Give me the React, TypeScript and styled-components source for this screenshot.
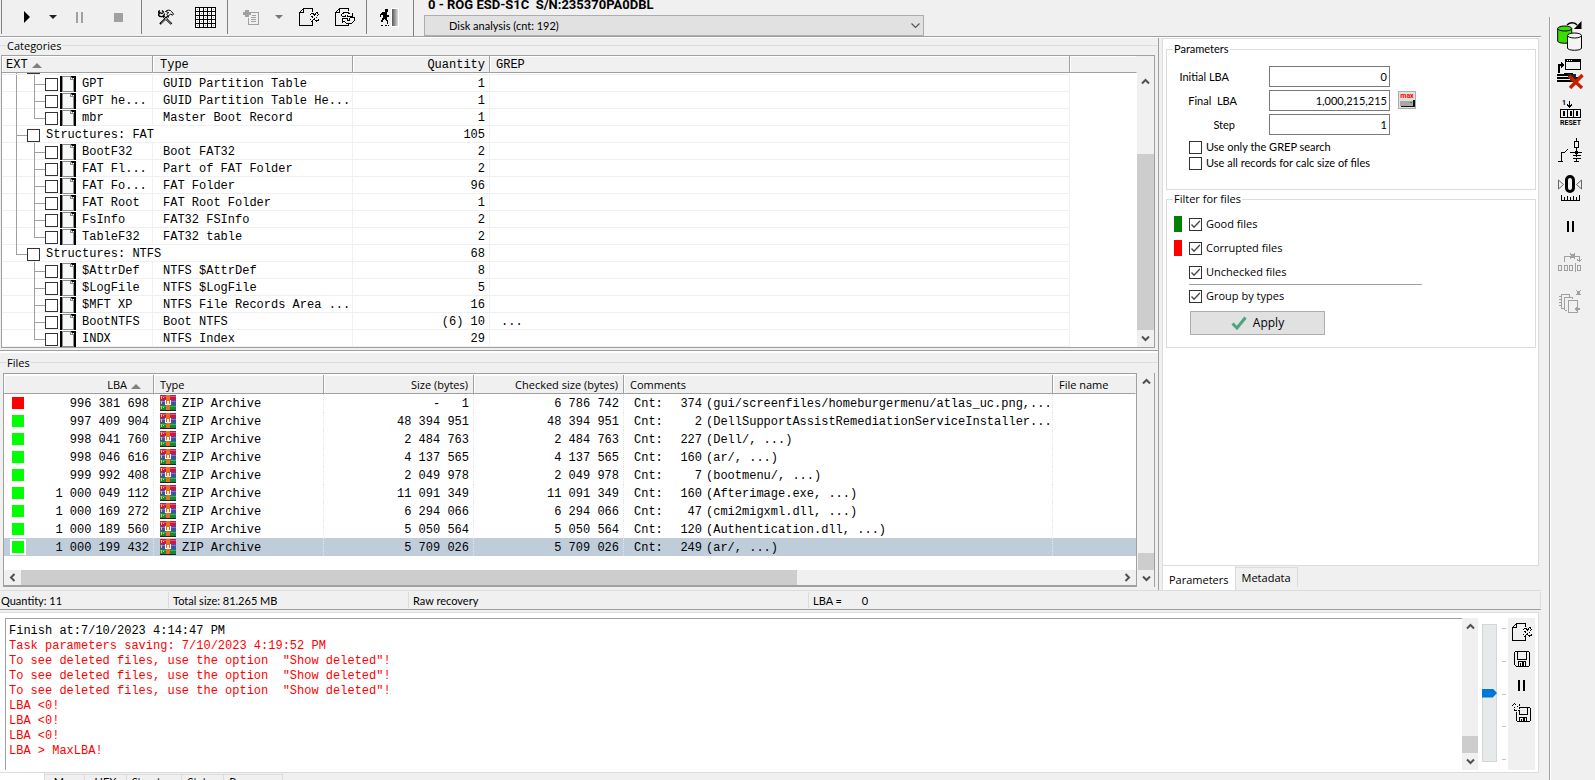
import React from "react";
import styled, { createGlobalStyle, css } from "styled-components";

const UI = '"Open Sans", "Noto Sans", sans-serif';
const NARROW = 'Lato, "Open Sans", sans-serif';
const MONO = '"Liberation Mono", "Courier New", monospace';

const C = {
  face: "#f0f0f0",
  shadow: "#a0a0a0",
  edge: "#dcdcdc",
  grid: "#f0f0f0",
  thumb: "#cdcdcd",
  select: "#bfccda",
};

const GlobalStyle = createGlobalStyle`
  *, *::before, *::after { box-sizing: border-box; }
  body { margin: 0; background: ${C.face}; color: #000; font: 11px/16px ${UI}; }
  button, input, select { font: inherit; color: inherit; margin: 0; }
`;

/* ---------- shell ---------- */

const Window = styled.div`
  display: flex;
  height: 100vh;
  overflow: hidden;
  background: ${C.face};
`;

const Main = styled.div`
  flex: 1;
  min-width: 0;
  display: flex;
  flex-direction: column;
`;

const Workspace = styled.div`
  flex: 1;
  min-height: 0;
  display: flex;
`;

const LeftPane = styled.div`
  flex: 1;
  min-width: 0;
  display: flex;
  flex-direction: column;
  border-right: 1px solid ${C.shadow};
`;

const RightPane = styled.aside`
  flex: none;
  width: 382px;
  padding: 0 2px 0 3px;
  display: flex;
  flex-direction: column;
`;

/* ---------- toolbar ---------- */

const ToolbarRow = styled.header`
  flex: none;
  display: flex;
  height: 38px;
  padding-left: 1px;
  border-bottom: 1px solid #fff;
  box-shadow: inset 0 -1px 0 ${C.shadow};
`;

const ToolGroup = styled.div<{ $l: number; $r: number; $gap: number }>`
  display: flex;
  align-items: center;
  gap: ${(p) => p.$gap}px;
  height: 34px;
  padding: 0 ${(p) => p.$r}px 0 ${(p) => p.$l}px;
  border-left: 1px solid #808080;
`;

const IconButton = styled.button`
  display: grid;
  place-items: center;
  padding: 0;
  border: 0;
  background: none;
`;

const StopButton = styled(IconButton)`
  margin-left: 12px;
`;

const TaskBox = styled.div`
  flex: 1;
  height: 36px;
  padding-left: 10px;
  border-left: 1px solid #808080;
  display: flex;
  flex-direction: column;
  justify-content: space-between;
`;

const TaskTitle = styled.h1`
  margin: 0 0 0 4px;
  height: 14px;
  display: flex;
  align-items: flex-end;
  overflow: hidden;
  font: 700 13px/18px Roboto, sans-serif;
  white-space: pre;
`;

const SelectWrap = styled.div`
  display: grid;
  width: 500px;
  height: 21px;
  align-items: center;
  > * { grid-area: 1 / 1; }
  > svg { justify-self: end; margin-right: 4px; pointer-events: none; }
`;

const TaskSelect = styled.select`
  width: 100%;
  height: 21px;
  padding: 0 20px 0 24px;
  border: 1px solid #adadad;
  border-radius: 0;
  background: #e1e1e1;
  appearance: none;
  font-family: ${NARROW};
`;

/* ---------- group frames ---------- */

const GroupTitle = styled.h2`
  flex: none;
  display: flex;
  align-items: center;
  gap: 1px;
  height: 15px;
  font: 11px/15px ${UI};
  &::before, &::after { content: ""; height: 1px; background: ${C.edge}; }
  &::before { width: 6px; }
  &::after { flex: 1; }
`;

const CategoriesGroup = styled.section`
  flex: none;
  padding: 0 3px 2px 1px;
  border-bottom: 1px solid ${C.shadow};
  > h2 { margin: 0 -3px 2px -1px; }
`;

const FilesGroup = styled.section`
  flex: 1;
  min-height: 0;
  display: flex;
  flex-direction: column;
  padding: 2px 3px 3px 3px;
  border-top: 2px solid #fff;
  > h2 { margin: 0 -3px 3px -3px; }
`;

const ListFrame = styled.div`
  display: flex;
  flex: 1;
  min-height: 0;
  border: 1px solid ${C.shadow};
  background: #fff;
`;

/* ---------- scroll bars ---------- */

const VBar = styled.div<{ $w: number; $lead?: number }>`
  flex: none;
  display: flex;
  flex-direction: column;
  align-items: center;
  width: ${(p) => p.$w}px;
  padding-top: ${(p) => p.$lead ?? 0}px;
  background: ${C.face};
`;

const HBar = styled.div`
  flex: none;
  display: flex;
  height: 15px;
  background: ${C.face};
`;

const BarButton = styled.button`
  flex: none;
  display: grid;
  place-items: center;
  width: 17px;
  height: 17px;
  padding: 0;
  border: 0;
  background: none;
`;

const HBarButton = styled(BarButton)`
  height: 15px;
`;

const Spring = styled.div<{ $grow: number }>`
  flex: ${(p) => p.$grow} 1 0;
`;

const Thumb = styled.div<{ $grow: number }>`
  flex: ${(p) => p.$grow} 1 0;
  align-self: stretch;
  background: ${C.thumb};
`;

/* ---------- tables ---------- */

const DataTable = styled.table`
  width: 100%;
  table-layout: fixed;
  border-collapse: separate;
  border-spacing: 0;
  font: 12px/16px ${MONO};
  white-space: pre;
  td, th { padding: 0; font-weight: 400; text-align: left; }
`;

const Col = styled.col<{ $w?: number }>`
  width: ${(p) => (p.$w ? p.$w + "px" : "auto")};
`;

const Head = styled.th<{ $ui?: boolean; $right?: boolean; $last?: boolean; $x?: number }>`
  height: ${(p) => (p.$ui ? 19 : 17)}px;
  background: ${C.face};
  border-bottom: 1px solid ${C.shadow};
  border-right: 1px solid ${(p) => (p.$last ? "transparent" : C.shadow)};
  box-shadow: inset 1px 1px 0 #fff;
  line-height: 13px;
  ${(p) => p.$ui && css`font: 11px/16px ${UI};`}
  && {
    text-align: ${(p) => (p.$right ? "right" : "left")};
    padding-top: ${(p) => (p.$ui ? 2 : 3)}px;
    padding-${(p) => (p.$right ? "right" : "left")}: ${(p) => p.$x ?? 0}px;
  }
  svg { margin-left: 4px; }
`;

const TreeTd = styled.td<{ $bare?: boolean; $right?: boolean; $x?: number }>`
  height: 17px;
  border-bottom: 1px solid ${C.grid};
  border-right: 1px solid ${C.grid};
  line-height: 13px;
  ${(p) => p.$bare && css`border-color: transparent;`}
  && {
    text-align: ${(p) => (p.$right ? "right" : "left")};
    padding-top: ${(p) => (p.$x ? 3 : 0)}px;
    padding-${(p) => (p.$right ? "right" : "left")}: ${(p) => p.$x ?? 0}px;
  }
`;

const PeekTd = styled.td`
  height: 2px;
  border-bottom: 1px solid ${C.grid};
  svg { display: block; height: 1px; }
`;

const TreeLabel = styled.label`
  display: flex;
  align-items: flex-end;
  height: 16px;
  > svg { flex: none; }
`;

const TreeText = styled.span`
  margin-left: 6px;
`;

const FileIconSlot = styled.span`
  height: 16px;
  margin: 0 0 -1px 2px;
  svg { display: block; }
`;

const Guide = styled.svg`
  display: block;
  margin-bottom: -1px;
`;

const Check = styled.input.attrs({ type: "checkbox" })`
  flex: none;
  appearance: none;
  width: 13px;
  height: 13px;
  border: 1px solid #333;
  background: #fff;
  &:checked {
    background: #fff url("data:image/svg+xml,%3Csvg xmlns='http://www.w3.org/2000/svg' viewBox='0 0 11 11'%3E%3Cpath d='M1.5 5.5 4 8.2 9.8 2' fill='none' stroke='%23444' stroke-width='1.3'/%3E%3C/svg%3E") center / 11px 11px no-repeat;
  }
`;

const FilesFrame = styled.div`
  flex: 1;
  min-height: 0;
  display: flex;
  border-right: 1px solid ${C.shadow};
  > :first-child { flex-direction: column; border-bottom-width: 2px; padding-top: 1px; margin-right: 1px; }
`;

const TableArea = styled.div`
  flex: 1;
  min-height: 0;
  overflow: hidden;
`;

const FileRow = styled.tr<{ $selected?: boolean }>`
  background: ${(p) => (p.$selected ? C.select : "#fff")};
`;

const FileTd = styled.td<{ $right?: boolean; $x?: number; $last?: boolean; $flex?: boolean }>`
  height: 18px;
  border-right: 1px dotted ${(p) => (p.$last ? "transparent" : "#e6e6e6")};
  && {
    text-align: ${(p) => (p.$right ? "right" : "left")};
    padding-top: ${(p) => (p.$flex ? 0 : 2)}px;
    padding-${(p) => (p.$right ? "right" : "left")}: ${(p) => p.$x ?? 0}px;
  }
`;

const CellText = styled.span`
  padding-top: 2px;
`;

const LbaCell = styled.div`
  display: flex;
  align-items: center;
  justify-content: space-between;
  padding-left: 6px;
  height: 18px;
`;

const Mark = styled.span<{ $bad?: boolean; $framed?: boolean }>`
  width: 16px;
  height: 16px;
  border: 2px solid ${(p) => (p.$framed ? "#fff" : "transparent")};
  background: ${(p) => (p.$bad ? "#f00" : "#0f0")} padding-box;
`;

const TypeCell = styled.div`
  display: flex;
  align-items: center;
  gap: 6px;
  height: 18px;
`;

const Comment = styled.div`
  display: grid;
  grid-template-columns: 36px 32px 1fr;
  > :nth-child(2) { text-align: right; }
  > :nth-child(3) { padding-left: 4px; }
`;

/* ---------- parameters page ---------- */

const Page = styled.div`
  flex: 1;
  display: flex;
  flex-direction: column;
  gap: 3px;
  padding: 4px 2px 4px 3px;
  border: 1px solid ${C.edge};
  background: #fff;
`;

const Box = styled.fieldset<{ $h: number }>`
  margin: 0;
  min-width: 0;
  height: ${(p) => p.$h}px;
  padding: 0 0 0 6px;
  border: 1px solid ${C.edge};
`;

const Legend = styled.legend<{ $narrow?: boolean }>`
  height: 12px;
  padding: 0 1px;
  line-height: 12px;
  font-family: ${(p) => (p.$narrow ? NARROW : UI)};
`;

const Fields = styled.div`
  padding-top: 11px;
`;

const Field = styled.label`
  display: grid;
  grid-template-columns: 96px 121px;
  align-items: center;
  margin-bottom: 3px;
  font-family: ${NARROW};
  white-space: pre;
`;

const FieldName = styled.span<{ $gap: number }>`
  text-align: right;
  padding-right: ${(p) => p.$gap}px;
`;

const NumberBox = styled.input.attrs({ type: "text" })`
  width: 121px;
  height: 21px;
  padding: 0 2px;
  border: 1px solid #7a7a7a;
  text-align: right;
  font-family: ${NARROW};
`;

const FieldRow = styled.div`
  display: flex;
  align-items: flex-start;
  > button { margin: 1px 0 0 8px; }
`;

const Option = styled.label<{ $narrow?: boolean; $h: number }>`
  display: flex;
  align-items: center;
  gap: 4px;
  height: ${(p) => p.$h}px;
  font-family: ${(p) => (p.$narrow ? NARROW : UI)};
`;

const OptionList = styled.div`
  padding: 1px 0 0 16px;
`;

const Filters = styled.div`
  padding: 7px 0 0 1px;
`;

const FilterRow = styled.div`
  display: flex;
  align-items: center;
  gap: 7px;
`;

const Swatch = styled.span<{ $c: string }>`
  width: 8px;
  height: 16px;
  background: ${(p) => p.$c};
`;

const Rule = styled.hr`
  width: 233px;
  height: 1px;
  margin: 0 0 -1px 15px;
  border: 0;
  background: ${C.shadow};
`;

const ApplyButton = styled.button`
  display: flex;
  align-items: center;
  justify-content: center;
  gap: 6px;
  width: 135px;
  height: 24px;
  margin: 3px 0 0 16px;
  padding: 0;
  border: 1px solid #adadad;
  background: #e1e1e1;
  font-size: 12px;
`;

const Tabs = styled.div`
  flex: none;
  display: flex;
  height: 24px;
`;

const Tab = styled.button<{ $active?: boolean }>`
  height: ${(p) => (p.$active ? 24 : 20)}px;
  margin-top: ${(p) => (p.$active ? 0 : 1)}px;
  padding: ${(p) => (p.$active ? 3 : 0)}px 6px 0;
  border: 1px solid ${C.edge};
  border-width: ${(p) => (p.$active ? "0 1px 0 1px" : "1px 1px 0 0")};
  background: ${(p) => (p.$active ? "#fff" : C.face)};
`;

/* ---------- status line ---------- */

const StatusBar = styled.footer`
  flex: none;
  display: flex;
  align-items: center;
  height: 20px;
  border-top: 1px solid ${C.edge};
  border-bottom: 1px solid ${C.shadow};
  font-family: ${NARROW};
  white-space: pre;
`;

const StatusCell = styled.span<{ $w?: number }>`
  ${(p) => (p.$w ? css`width: ${p.$w}px;` : css`flex: 1;`)}
  height: 16px;
  padding-left: 4px;
  border-left: 1px solid ${C.edge};
  line-height: 17px;
  &:first-child { padding-left: 1px; border-left: 0; }
  &:last-child { border-right: 1px solid ${C.edge}; }
`;

/* ---------- log ---------- */

const LogPage = styled.section`
  flex: none;
  display: flex;
  height: 161px;
  margin: 2px 2px 0 0;
  padding: 5px 3px 2px 5px;
  border: 1px solid ${C.edge};
  border-left: 0;
  background: #fff;
`;

const LogText = styled.div`
  flex: 1;
  min-width: 0;
  padding: 5px 3px;
  border: 1px solid ${C.shadow};
  border-width: 1px 0 0 1px;
  font: 12px/15px ${MONO};
  white-space: pre;
`;

const LogLine = styled.p<{ $alert?: boolean }>`
  margin: 0;
  color: ${(p) => (p.$alert ? "#f00" : "#000")};
`;

const SliderBox = styled.div`
  flex: none;
  display: flex;
  gap: 5px;
  width: 30px;
  padding: 6px 0 6px 4px;
`;

const Slider = styled.input.attrs({ type: "range" })`
  writing-mode: vertical-lr;
  appearance: none;
  width: 15px;
  height: 138px;
  margin: 0;
  border: 1px solid #d6d6d6;
  background: #e7eaea;
  &::-webkit-slider-thumb {
    appearance: none;
    width: 15px;
    height: 9px;
    background: #0078d7;
    clip-path: polygon(0 0, 72% 0, 100% 50%, 72% 100%, 0 100%);
  }
`;

const Ticks = styled.div`
  display: flex;
  flex-direction: column;
  justify-content: space-between;
  padding: 4px 0;
  > i { width: 4px; height: 1px; background: #c4c4c4; }
`;

const LogTools = styled.div`
  flex: none;
  display: flex;
  flex-direction: column;
  align-items: center;
  width: 27px;
  background: ${C.face};
  > button { width: 27px; height: 27px; }
`;

const BottomTabs = styled.nav`
  flex: none;
  display: flex;
  align-items: flex-start;
  height: 7px;
  overflow: hidden;
`;

const BottomTab = styled.button<{ $active?: boolean; $w: number }>`
  flex: none;
  width: ${(p) => p.$w}px;
  height: 14px;
  margin-top: ${(p) => (p.$active ? 0 : 1)}px;
  padding: 0;
  border: 1px solid ${C.edge};
  border-width: ${(p) => (p.$active ? "0 1px 0 0" : "1px 1px 0 0")};
  background: ${(p) => (p.$active ? "#fff" : C.face)};
  line-height: 12px;
  font-family: ${NARROW};
`;

/* ---------- side tool strip ---------- */

const SideStrip = styled.aside`
  flex: none;
  width: 46px;
  margin: 17px 0 0 8px;
  border-left: 1px solid ${C.shadow};
  box-shadow: inset 1px 0 0 #fff;
  display: flex;
  flex-direction: column;
  align-items: flex-start;
  > button { width: 40px; height: 38px; }
`;

/* ---------- icons ---------- */

type IconProps = { w: number; h: number; children: React.ReactNode; soft?: boolean };
const Icon = ({ w, h, children, soft }: IconProps) => (
  <svg width={w} height={h} viewBox={`0 0 ${w} ${h}`} fill="none" stroke="none" shapeRendering={soft ? "auto" : "crispEdges"} aria-hidden="true">
    {children}
  </svg>
);

const IconText = styled.text`
  font: 700 7px Roboto, sans-serif;
`;

const PlayIcon = () => <Icon w={6} h={12} soft><path d="M0 0 6 6 0 12z" fill="#000" /></Icon>;
const DropIcon = ({ c }: { c: string }) => <Icon w={8} h={4} soft><path d="M0 0H8L4 4z" fill={c} /></Icon>;
const PauseIcon = ({ c }: { c: string }) => <Icon w={7} h={11}><path d="M0 0h2v11H0zM5 0h2v11H5z" fill={c} /></Icon>;
const StopIcon = () => <Icon w={9} h={9}><path d="M0 0h9v9H0z" fill="#a0a0a0" /></Icon>;
const SortIcon = () => <Icon w={10} h={5} soft><path d="M5 0 10 5H0z" fill="#808080" /></Icon>;

const ToolsIcon = () => (
  <Icon w={16} h={16} soft>
    <path d="M5 7 13.500 15M10.500 7 2 15" stroke="#000" strokeWidth="2.200" />
    <path d="M6 8 13 14.500M10 8 3 14.500" stroke="#f0f0f0" strokeWidth=".700" />
    <path d="M2 1.500A3.200 3.200 0 1 0 6.500 4.500M1.500 5.500V3.500L4 4.500 5.500 3 4 1.500" stroke="#000" strokeWidth="1.200" />
    <path d="M7.500 2.500C9 .700 12.500.700 13.500 2.500L15.500 5 14.500 6.200 12.500 5 10.500 7 9 5.500 10.500 3.500z" fill="#f0f0f0" stroke="#000" />
  </Icon>
);

const GridIcon = () => (
  <Icon w={21} h={21}>
    <path d="M0 0h21v21H0z" fill="#000" />
    {[0, 1, 2, 3, 4].flatMap((r) => [0, 1, 2, 3, 4].map((c) => (
      <g key={`${r}${c}`}>
        <rect x={1 + c * 4} y={1 + r * 4} width={3} height={3} fill="#fff" />
        <rect x={2 + c * 4} y={2 + r * 4} width={1} height={1} fill={(r + c) % 2 ? "#ddd" : "#999"} />
      </g>
    )))}
  </Icon>
);

const AddListIcon = () => (
  <Icon w={16} h={15}>
    <path d="M2 0h4v2h2v3H6v2H2V5H0V2h2z" fill="#a0a0a0" />
    <path d="M8 2.500h7.500v12h-10V8M9 5.500h4M8 7.500h5M8 9.500h5M8 11.500h5" stroke="#a0a0a0" />
  </Icon>
);

const DocXIcon = () => (
  <Icon w={20} h={18}>
    <path d="M13.500 4V.500H4.500L.500 4.500V17.500H13.500V14M4.500.500V4.500H.500" stroke="#000" />
    <path d="M11.500 6.500 13 4.500 15.500 7 18 4.500 19.500 6 17.500 9 19.500 12 18 13.500 15.500 11 13 13.500 11.500 12 13.500 9z" fill="#f0f0f0" stroke="#000" strokeDasharray="2 1" />
  </Icon>
);

const DocRefreshIcon = () => (
  <Icon w={20} h={18}>
    <path d="M13.500 3V.500H4.500L.500 4.500V17.500H13.500V16M4.500.500V4.500H.500" stroke="#000" />
    <path d="M6.500 8V6.500L9 4.500H13L15.500 6.500M12.500 6.500V8.500H17.500V5M19.500 9.500V12.500L16.500 15.500H11.500L8.500 13M12 12.500V10.500H7.500V14.500M6.500 8.500H10.500M15 9.500H19.500M10.500 8V6.500M14.500 10V12.500H12" stroke="#000" />
  </Icon>
);

const ExitIcon = () => (
  <Icon w={20} h={19}>
    <defs>
      <linearGradient id="door"><stop offset="0" stopColor="#555" /><stop offset="1" stopColor="#ddd" /></linearGradient>
    </defs>
    <path d="M11 0h8v19h-8z" fill="#fff" />
    <path d="M12 1h6v17h-6z" fill="url(#door)" />
    <path d="M5 1h3v3H5zM3 4h4v3h2v2H7v2l1 2v3H7v-2l-3-3-1 3H1v-1l2-4V7H1v2H0V6z" fill="#000" />
    <path d="M1 17.500h2M5 17.500h2M8 17.500h1" stroke="#000" />
  </Icon>
);

const Chevron = ({ dir }: { dir: "up" | "down" | "left" | "right" }) => {
  const d = { up: "M1 6.500 4.500 3 8 6.500", down: "M1 2.500 4.500 6 8 2.500", left: "M6.500 1 3 4.500 6.500 8", right: "M2.500 1 6 4.500 2.500 8" }[dir];
  return <Icon w={9} h={9} soft><path d={d} stroke="#505050" strokeWidth="2" /></Icon>;
};

const FileIcon = () => (
  <Icon w={16} h={16}>
    <path d="M0 0h2v16H0zM14 0h2v16h-2zM11 0h3v2h-3z" fill="#000" />
    <path d="M2.500.500h8l3 3v12h-11z" fill="#f7f8fa" stroke="#8c8c8c" />
    <path d="M10.500.500v3h3" stroke="#8c8c8c" />
  </Icon>
);

const ArchiveIcon = () => (
  <Icon w={16} h={16}>
    <path d="M0 0h16v5H0z" fill="#c8194b" />
    <path d="M0 1h16v1H0z" fill="#e0507a" />
    <path d="M0 5h16v5H0z" fill="#4a4aa8" />
    <path d="M0 6h16v1H0z" fill="#7878c8" />
    <path d="M0 10h16v5H0z" fill="#128a3a" />
    <path d="M0 11h16v1H0z" fill="#3cb05c" />
    <path d="M0 15h16v1H0z" fill="#222" />
    <path d="M1 1h1v3H1zM1 6h1v3H1zM1 11h1v3H1zM3 2h1v1H3zM3 12h1v1H3z" fill="#f5c542" />
    <path d="M6 0h4v15H6z" fill="#e8701c" />
    <path d="M5 5h1v4h1V6h2v3h1V5h1v5H5z" fill="#f4f4f4" />
  </Icon>
);

const CheckMark = () => <Icon w={16} h={14} soft><path d="M1.500 7.500 6 12 14.500 1.500" stroke="#4ba580" strokeWidth="3" /></Icon>;

const MaxIcon = () => (
  <Icon w={18} h={18}>
    <path d="M.500.500h17v17H.500z" fill="#e1e1e1" stroke="#adadad" />
    <IconText x="9" y="7" textAnchor="middle" fill="#f00">max</IconText>
    <path d="M4 8h12l1 2v6H3l-1-2v-4z" fill="#111" />
    <path d="M2 10h13v5H2z" fill="#a8a8a8" />
    <path d="M4 8h12l-1 2H3z" fill="#ddd" />
    <path d="M12 11h2v1h-2z" fill="#0a0" />
  </Icon>
);

const FloppyIcon = () => (
  <Icon w={16} h={16}>
    <path d="M1.500.500h13l1 1v13l-1 1h-12l-2-2v-12z" stroke="#000" />
    <path d="M3.500.500v8h9v-8M4.500 15.500v-5h7v5M6.500 12v3.500" stroke="#000" />
    <path d="M8 11h2v4H8z" fill="#000" />
  </Icon>
);

const FloppyArrowIcon = () => (
  <Icon w={19} h={19}>
    <path d="M8 4.500h9.500l1 1v12l-1 1h-12l-1.500-1.500V9" stroke="#000" />
    <path d="M7.500 8v3.500h8v-7M7.500 18.500v-4h7v4M9.500 16v2.500" stroke="#000" />
    <path d="M11 15h2v3h-2z" fill="#000" />
    <path d="M2.500.500 5.500 3.500 7.500 2V7.500H2L3.500 5.500.500 2.500z" fill="#f0f0f0" stroke="#000" strokeDasharray="2 1" />
  </Icon>
);

const CopyDiskIcon = () => (
  <Icon w={26} h={30} soft>
    <path d="M10 4C13 1 18 1 20 4" stroke="#000" strokeWidth="1.400" />
    <path d="M24.500 0v8H17z" fill="#000" />
    <path d="M.700 7.500v12.500c0 3 14 3 14 0V7.500" fill="#3adf00" stroke="#000" />
    <ellipse cx="7.700" cy="7.500" rx="7" ry="2.500" fill="#3adf00" stroke="#000" />
    <path d="M10.500 14.500v12.500c0 3 14 3 14 0V14.500" fill="#f4f4f4" stroke="#000" />
    <ellipse cx="17.500" cy="14.500" rx="7" ry="2.500" fill="#f4f4f4" stroke="#000" />
  </Icon>
);

const WindowKillIcon = () => (
  <Icon w={28} h={30}>
    <path d="M9.500.500h15v10h-15z" stroke="#000" />
    <path d="M9 0h16v3H9z" fill="#000" />
    <path d="M11 1.500h1M13 1.500h1M15 1.500h1" stroke="#fff" />
    <path d="M2.500 14V6H5" stroke="#000" strokeWidth="2" />
    <path d="M5 3l4 3-4 3z" fill="#000" />
    <path d="M1 16h11M1 19h22M1 22h14M8 14.500h9" stroke="#000" strokeWidth="2" />
    <path d="M11 15h9v8h-5z" fill="#222" />
    <path d="M13 17l13 12M26.500 16 14 29" stroke="#c81e00" strokeWidth="3.400" shapeRendering="auto" />
  </Icon>
);

const ResetIcon = () => (
  <Icon w={21} h={27}>
    <IconText x="2" y="6" fill="#000">1</IconText>
    <path d="M9.500 1.500V7M7 5.500 9.500 8 12 5.500" stroke="#000" />
    <path d="M0 10.500h21M0 18.500h21M.500 10v9M7.500 10v9M13.500 10v9M20.500 10v9M3.500 12.500h1v4h-1zM10.500 12.500h1v4h-1zM16.500 12.500h1v4h-1z" stroke="#000" />
    <IconText x="10.500" y="26" textAnchor="middle" fill="#000">RESET</IconText>
  </Icon>
);

const SwitchIcon = () => (
  <Icon w={24} h={25}>
    <path d="M0 23.500h5M3.500 23.500V14.500H6.500L10 11M12 14.500h12M18.500 0v3M16.500 3.500h4v6h-4zM18.500 10v9M15 17.500h8M15 20.500h8M18.500 20v4M16 23.500h5" stroke="#000" />
    <path d="M17 13h3v3h-3z" fill="#000" />
  </Icon>
);

const ZeroIcon = () => (
  <Icon w={24} h={26} soft>
    <rect x="8.500" y="1.500" width="7" height="15" rx="3.500" stroke="#000" strokeWidth="3" />
    <path d="M.500 5v9L5.500 9.500zM23.500 5v9L18.500 9.500z" stroke="#666" />
    <path d="M3.500 20v5h18v-5M6.500 22v3M9.500 21v4M12.500 22v3M15.500 21v4M18.500 22v3" stroke="#000" shapeRendering="crispEdges" />
  </Icon>
);

const ShiftIcon = () => (
  <Icon w={24} h={23}>
    <path d="M.500 12.500h3v5h-3zM6.500 12.500h3v5h-3zM11.500 12.500h3v5h-3zM19.500 12.500h3v5h-3zM17 9.500v9M6.500 9V3.500H21.500V8M19 6.500l2.500 2 2-2M12 .500l5 5M17 .500l-5 5M13 3h4" stroke="#a0a0a0" />
    <path d="M13 1h4v4h-4z" fill="#a0a0a0" />
  </Icon>
);

const DocsIcon = () => (
  <Icon w={23} h={24}>
    <path d="M2 4.500H10.500V7M2.500 4v14.500H5M0 6.500h2M0 9.500h2M0 12.500h2M0 15.500h2M5.500 20V7.500H13.500V9M5.500 20.500H8M9.500 10.500h9v12h-9zM17 0l5 5M22 0l-5 5" stroke="#a0a0a0" />
    <path d="M18 1h3v4h-3zM17 18h4v2h-4zM15 19l3-2v4z" fill="#a0a0a0" />
  </Icon>
);

/* ---------- data ---------- */

type TreeRow = { group?: boolean; ext: string; type?: string; qty: string; grep?: string; last?: boolean; tail?: boolean };
const tree: TreeRow[] = [
  { ext: "GPT", type: "GUID Partition Table", qty: "1" },
  { ext: "GPT he...", type: "GUID Partition Table He...", qty: "1" },
  { ext: "mbr", type: "Master Boot Record", qty: "1", last: true },
  { group: true, ext: "Structures: FAT", qty: "105" },
  { ext: "BootF32", type: "Boot FAT32", qty: "2" },
  { ext: "FAT Fl...", type: "Part of FAT Folder", qty: "2" },
  { ext: "FAT Fo...", type: "FAT Folder", qty: "96" },
  { ext: "FAT Root", type: "FAT Root Folder", qty: "1" },
  { ext: "FsInfo", type: "FAT32 FSInfo", qty: "2" },
  { ext: "TableF32", type: "FAT32 table", qty: "2", last: true },
  { group: true, ext: "Structures: NTFS", qty: "68", last: true },
  { ext: "$AttrDef", type: "NTFS $AttrDef", qty: "8", tail: true },
  { ext: "$LogFile", type: "NTFS $LogFile", qty: "5", tail: true },
  { ext: "$MFT XP", type: "NTFS File Records Area ...", qty: "16", tail: true },
  { ext: "BootNTFS", type: "Boot NTFS", qty: "(6) 10", grep: "...", tail: true },
  { ext: "INDX", type: "NTFS Index", qty: "29", last: true, tail: true },
];

const files = [
  ["996 381 698", "-   1", "6 786 742", "374", "(gui/screenfiles/homeburgermenu/atlas_uc.png,..."],
  ["997 409 904", "48 394 951", "48 394 951", "2", "(DellSupportAssistRemediationServiceInstaller..."],
  ["998 041 760", "2 484 763", "2 484 763", "227", "(Dell/, ...)"],
  ["998 046 616", "4 137 565", "4 137 565", "160", "(ar/, ...)"],
  ["999 992 408", "2 049 978", "2 049 978", "7", "(bootmenu/, ...)"],
  ["1 000 049 112", "11 091 349", "11 091 349", "160", "(Afterimage.exe, ...)"],
  ["1 000 169 272", "6 294 066", "6 294 066", "47", "(cmi2migxml.dll, ...)"],
  ["1 000 189 560", "5 050 564", "5 050 564", "120", "(Authentication.dll, ...)"],
  ["1 000 199 432", "5 709 026", "5 709 026", "249", "(ar/, ...)"],
];

const log = [
  "Finish at:7/10/2023 4:14:47 PM",
  "Task parameters saving: 7/10/2023 4:19:52 PM",
  'To see deleted files, use the option  "Show deleted"!',
  'To see deleted files, use the option  "Show deleted"!',
  'To see deleted files, use the option  "Show deleted"!',
  "LBA <0!",
  "LBA <0!",
  "LBA <0!",
  "LBA > MaxLBA!",
];

/* ---------- parts ---------- */

const TreeGuide = ({ row }: { row: TreeRow }) => {
  if (row.group) {
    return (
      <Guide width={25} height={17} shapeRendering="crispEdges">
        <path d={row.last ? "M14.500 0V9.500H25" : "M14.500 0V17M14.500 9.500H25"} fill="none" stroke={C.shadow} />
      </Guide>
    );
  }
  const trunk = row.tail ? "" : "M14.500 0V17";
  const branch = row.last ? "M32.500 0V9.500H43" : "M32.500 0V17M32.500 9.500H43";
  return (
    <Guide width={43} height={17} shapeRendering="crispEdges">
      <path d={trunk + branch} fill="none" stroke={C.shadow} />
    </Guide>
  );
};

const CategoryTable = () => (
  <DataTable>
    <colgroup>
      <Col $w={151} /><Col $w={200} /><Col $w={137} /><Col $w={580} /><Col />
    </colgroup>
    <thead>
      <tr>
        <Head $x={4}>EXT<SortIcon /></Head>
        <Head $x={7}>Type</Head>
        <Head $x={4} $right>Quantity</Head>
        <Head $x={6}>GREP</Head>
        <Head $last />
      </tr>
    </thead>
    <tbody>
      <tr>
        <PeekTd colSpan={4}>
          <svg width="39" height="1" shapeRendering="crispEdges" aria-hidden="true">
            <path d="M14 0h1v1h-1z" fill={C.shadow} />
            <path d="M25 0h13v1H25z" fill="#333" />
          </svg>
        </PeekTd>
        <td />
      </tr>
      {tree.map((r) => (
        <tr key={r.ext}>
          <TreeTd colSpan={r.group ? 2 : 1}>
            <TreeLabel>
              <TreeGuide row={r} />
              <Check />
              {!r.group && <FileIconSlot><FileIcon /></FileIconSlot>}
              <TreeText>{r.ext}</TreeText>
            </TreeLabel>
          </TreeTd>
          {!r.group && <TreeTd $x={10}>{r.type}</TreeTd>}
          <TreeTd $right $x={4}>{r.qty}</TreeTd>
          <TreeTd $x={11}>{r.grep}</TreeTd>
          <TreeTd $bare />
        </tr>
      ))}
    </tbody>
  </DataTable>
);

const FilesTable = () => (
  <DataTable>
    <colgroup>
      <Col $w={150} /><Col $w={170} /><Col $w={150} /><Col $w={150} /><Col $w={429} /><Col />
    </colgroup>
    <thead>
      <tr>
        <Head $ui $right $x={12}>LBA<SortIcon /></Head>
        <Head $ui $x={6}>Type</Head>
        <Head $ui $right $x={5}>Size (bytes)</Head>
        <Head $ui $right $x={5}>Checked size (bytes)</Head>
        <Head $ui $x={6}>Comments</Head>
        <Head $ui $x={6} $last>File name</Head>
      </tr>
    </thead>
    <tbody>
      {files.map(([lba, size, checked, count, name], i) => {
        const selected = i === files.length - 1;
        return (
          <FileRow key={lba} $selected={selected}>
            <FileTd $flex $right $x={4}>
              <LbaCell><Mark $bad={i === 0} $framed={selected} /><CellText>{lba}</CellText></LbaCell>
            </FileTd>
            <FileTd $flex $x={6}><TypeCell><ArchiveIcon /><CellText>ZIP Archive</CellText></TypeCell></FileTd>
            <FileTd $right $x={4}>{size}</FileTd>
            <FileTd $right $x={4}>{checked}</FileTd>
            <FileTd $x={10}>
              <Comment><span>Cnt:</span><span>{count}</span><span>{name}</span></Comment>
            </FileTd>
            <FileTd $last />
          </FileRow>
        );
      })}
    </tbody>
  </DataTable>
);

export default function App() {
  return (
    <>
      <GlobalStyle />
      <Window>
        <Main>
          <ToolbarRow>
            <ToolGroup $l={22} $r={18} $gap={19}>
              <IconButton aria-label="Start"><PlayIcon /></IconButton>
              <IconButton aria-label="Start options"><DropIcon c="#222" /></IconButton>
              <IconButton aria-label="Pause"><PauseIcon c="#a0a0a0" /></IconButton>
              <StopButton aria-label="Stop"><StopIcon /></StopButton>
            </ToolGroup>
            <ToolGroup $l={16} $r={11} $gap={21}>
              <IconButton aria-label="Tools"><ToolsIcon /></IconButton>
              <IconButton aria-label="Map"><GridIcon /></IconButton>
            </ToolGroup>
            <ToolGroup $l={15} $r={11} $gap={16}>
              <IconButton aria-label="Add to list"><AddListIcon /></IconButton>
              <IconButton aria-label="List options"><DropIcon c="#777" /></IconButton>
              <IconButton aria-label="Clear document"><DocXIcon /></IconButton>
              <IconButton aria-label="Reload document"><DocRefreshIcon /></IconButton>
            </ToolGroup>
            <ToolGroup $l={13} $r={13} $gap={0}>
              <IconButton aria-label="Exit"><ExitIcon /></IconButton>
            </ToolGroup>
            <TaskBox>
              <TaskTitle>{"0 - ROG ESD-S1C  S/N:235370PA0DBL"}</TaskTitle>
              <SelectWrap>
                <TaskSelect aria-label="Task"><option>Disk analysis (cnt: 192)</option></TaskSelect>
                <Icon w={9} h={6} soft><path d="M.500.500 4.500 4.500 8.500.500" stroke="#555" strokeWidth="1.200" /></Icon>
              </SelectWrap>
            </TaskBox>
          </ToolbarRow>

          <Workspace>
            <LeftPane>
              <CategoriesGroup>
                <GroupTitle>Categories</GroupTitle>
                <ListFrame>
                  <TableArea><CategoryTable /></TableArea>
                  <VBar $w={17} $lead={17}>
                    <BarButton aria-label="Scroll up"><Chevron dir="up" /></BarButton>
                    <Spring $grow={64} />
                    <Thumb $grow={176} />
                    <BarButton aria-label="Scroll down"><Chevron dir="down" /></BarButton>
                  </VBar>
                </ListFrame>
              </CategoriesGroup>

              <FilesGroup>
                <GroupTitle>Files</GroupTitle>
                <FilesFrame>
                  <ListFrame>
                    <TableArea><FilesTable /></TableArea>
                    <HBar>
                      <HBarButton aria-label="Scroll left"><Chevron dir="left" /></HBarButton>
                      <Thumb $grow={776} />
                      <Spring $grow={322} />
                      <HBarButton aria-label="Scroll right"><Chevron dir="right" /></HBarButton>
                    </HBar>
                  </ListFrame>
                  <VBar $w={16}>
                    <BarButton aria-label="Scroll up"><Chevron dir="up" /></BarButton>
                    <Spring $grow={163} />
                    <Thumb $grow={17} />
                    <BarButton aria-label="Scroll down"><Chevron dir="down" /></BarButton>
                  </VBar>
                </FilesFrame>
              </FilesGroup>
            </LeftPane>

            <RightPane>
              <Page>
                <Box $h={147}>
                  <Legend $narrow>Parameters</Legend>
                  <Fields>
                    <Field><FieldName $gap={40}>Initial LBA</FieldName><NumberBox defaultValue="0" /></Field>
                    <FieldRow>
                      <Field><FieldName $gap={32}>{"Final  LBA"}</FieldName><NumberBox defaultValue="1,000,215,215" /></Field>
                      <IconButton aria-label="Maximum"><MaxIcon /></IconButton>
                    </FieldRow>
                    <Field><FieldName $gap={34}>Step</FieldName><NumberBox defaultValue="1" /></Field>
                  </Fields>
                  <OptionList>
                    <Option $narrow $h={16}><Check />Use only the GREP search</Option>
                    <Option $narrow $h={16}><Check />Use all records for calc size of files</Option>
                  </OptionList>
                </Box>
                <Box $h={155}>
                  <Legend>Filter for files</Legend>
                  <Filters>
                    <FilterRow><Swatch $c="#008000" /><Option $h={24}><Check defaultChecked />Good files</Option></FilterRow>
                    <FilterRow><Swatch $c="#f00" /><Option $h={24}><Check defaultChecked />Corrupted files</Option></FilterRow>
                    <FilterRow><Swatch $c="transparent" /><Option $h={24}><Check defaultChecked />Unchecked files</Option></FilterRow>
                    <Rule />
                    <FilterRow><Swatch $c="transparent" /><Option $h={24}><Check defaultChecked />Group by types</Option></FilterRow>
                    <ApplyButton><CheckMark />Apply</ApplyButton>
                  </Filters>
                </Box>
              </Page>
              <Tabs>
                <Tab $active>Parameters</Tab>
                <Tab>Metadata</Tab>
              </Tabs>
            </RightPane>
          </Workspace>

          <StatusBar>
            <StatusCell $w={168}>Quantity: 11</StatusCell>
            <StatusCell $w={240}>Total size: 81.265 MB</StatusCell>
            <StatusCell $w={400}>Raw recovery</StatusCell>
            <StatusCell>{"LBA =       0"}</StatusCell>
          </StatusBar>

          <LogPage>
            <LogText role="log">
              {log.map((line, i) => <LogLine key={i} $alert={i > 0}>{line}</LogLine>)}
            </LogText>
            <VBar $w={16}>
              <BarButton aria-label="Scroll up"><Chevron dir="up" /></BarButton>
              <Spring $grow={100} />
              <Thumb $grow={17} />
              <BarButton aria-label="Scroll down"><Chevron dir="down" /></BarButton>
            </VBar>
            <SliderBox>
              <Slider aria-label="Log detail" defaultValue={50} />
              <Ticks><i /><i /><i /><i /><i /></Ticks>
            </SliderBox>
            <LogTools>
              <IconButton aria-label="Clear log"><DocXIcon /></IconButton>
              <IconButton aria-label="Save log"><FloppyIcon /></IconButton>
              <IconButton aria-label="Pause log"><PauseIcon c="#000" /></IconButton>
              <IconButton aria-label="Save log as"><FloppyArrowIcon /></IconButton>
            </LogTools>
          </LogPage>

          <BottomTabs>
            <BottomTab $active $w={45} aria-label="Log" />
            <BottomTab $w={40}>Map</BottomTab>
            <BottomTab $w={42}>HEX</BottomTab>
            <BottomTab $w={55}>Structure</BottomTab>
            <BottomTab $w={42}>Status</BottomTab>
            <BottomTab $w={59}>Processes</BottomTab>
          </BottomTabs>
        </Main>

        <SideStrip>
          <IconButton aria-label="Copy disk"><CopyDiskIcon /></IconButton>
          <IconButton aria-label="Close windows"><WindowKillIcon /></IconButton>
          <IconButton aria-label="Reset counter"><ResetIcon /></IconButton>
          <IconButton aria-label="Power switch"><SwitchIcon /></IconButton>
          <IconButton aria-label="Zero position"><ZeroIcon /></IconButton>
          <IconButton aria-label="Pause"><PauseIcon c="#000" /></IconButton>
          <IconButton aria-label="Shift blocks"><ShiftIcon /></IconButton>
          <IconButton aria-label="Copy pages"><DocsIcon /></IconButton>
        </SideStrip>
      </Window>
    </>
  );
}
